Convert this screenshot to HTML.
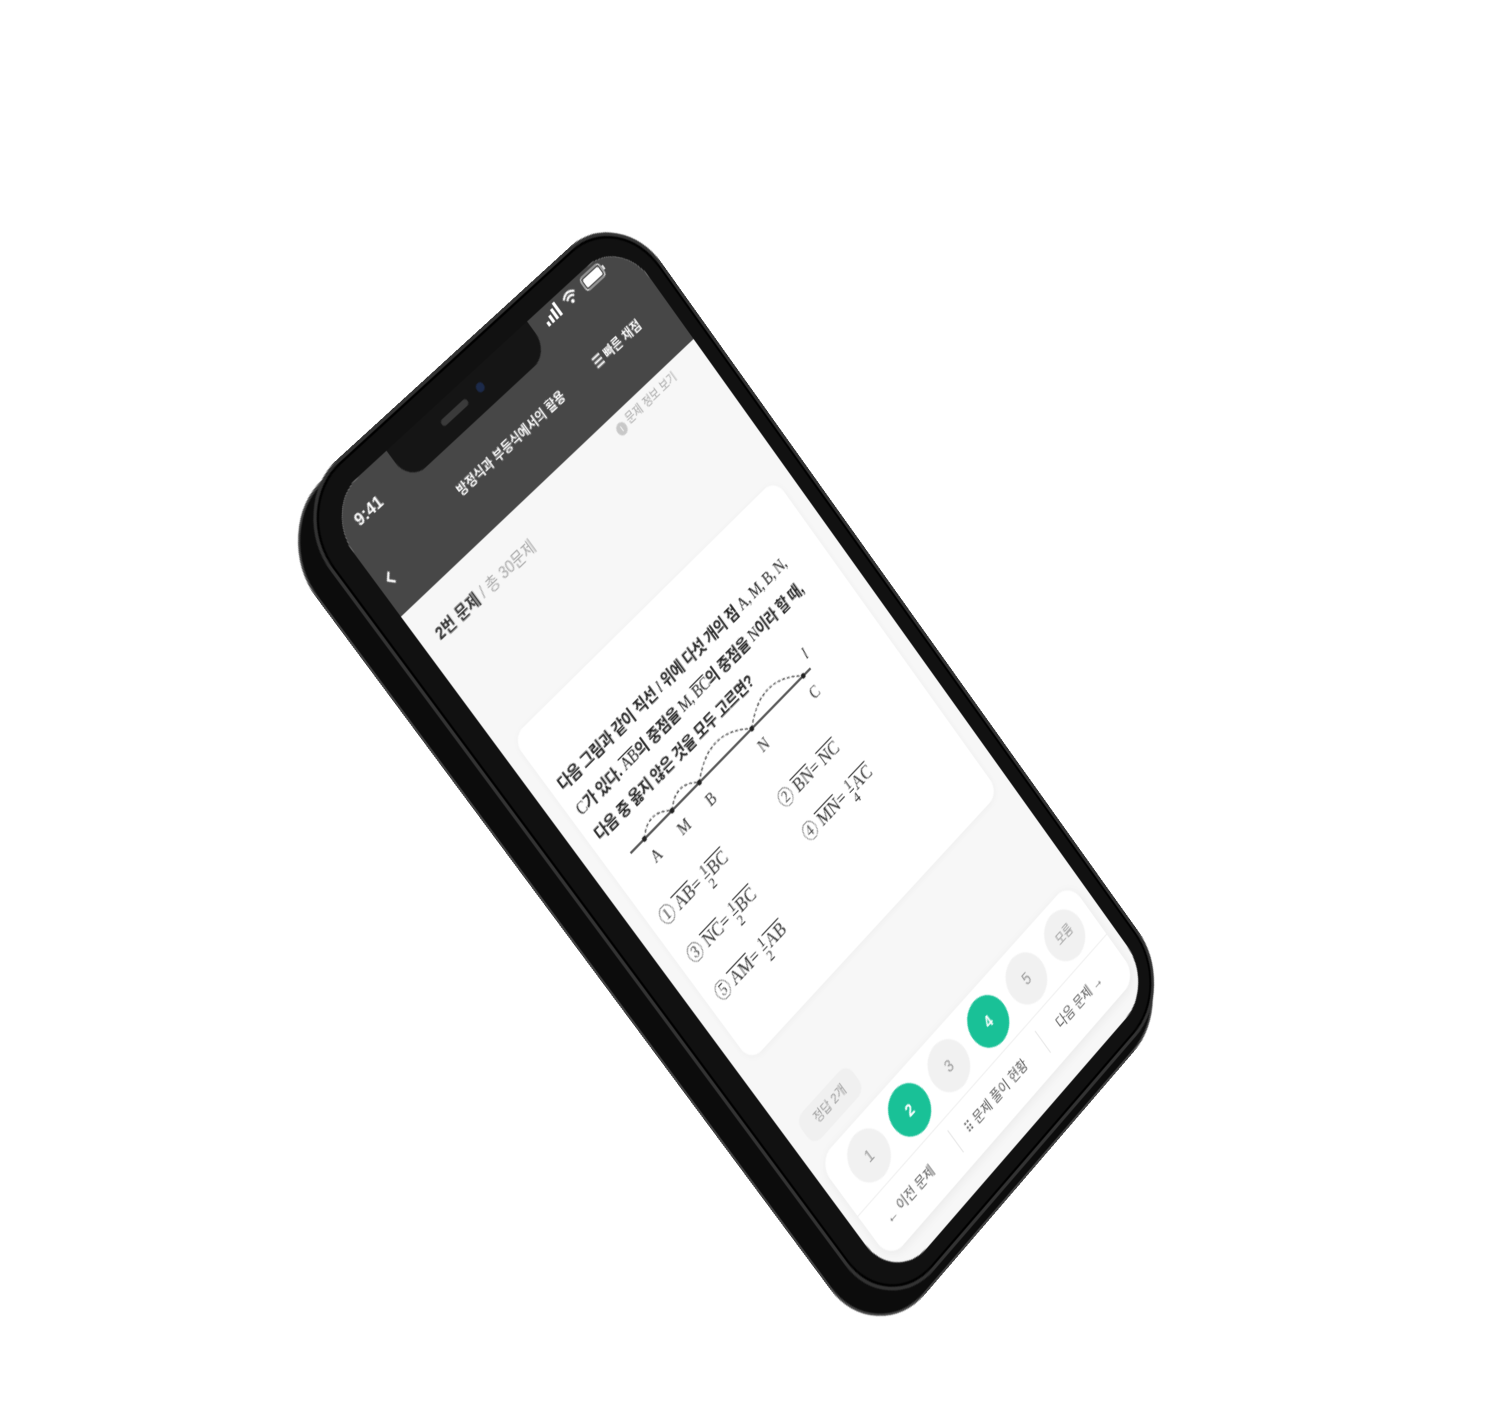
<!DOCTYPE html>
<html><head><meta charset="utf-8">
<style>
html,body{margin:0;padding:0;background:#fff;width:1498px;height:1416px;overflow:hidden}
*{box-sizing:border-box}
.world{position:absolute;left:0;top:0;width:375px;height:812px;transform-origin:0 0;
transform:matrix3d(0.8792,-0.6985,0,0.00013632, 0.7508,1.0192,0,0.00005044, 0,0,1,0, 322,510,0,1);
font-family:"Liberation Sans","Noto Sans CJK KR",sans-serif}
.abs{position:absolute}
.side{left:-50px;top:-18px;width:436px;height:856px;border-radius:68px;background:#0c0c0c;border:2px solid #444}
.body{left:-26px;top:-22px;width:419px;height:852px;border-radius:64px;background:#111;border:3px solid #333;box-shadow:inset 0 0 0 2px #000}
.screen{left:0;top:0;width:375px;height:812px;border-radius:44px;background:#f7f7f7;overflow:hidden}
.hdr{left:0;top:0;width:375px;height:108px;background:#474747}
.notch{left:78px;top:-2px;width:176px;height:34px;background:#151515;border-radius:0 0 20px 20px}
.w{color:#fff}
.c{position:absolute;width:44px;height:44px;border-radius:50%;background:#f1f1f1;color:#9a9a9a;font-size:14px;text-align:center;line-height:44px}
.c.g{background:#19c197;color:#fff;font-weight:bold}
.serif{font-family:"Liberation Serif","Noto Serif CJK SC",serif}
.ov{text-decoration:overline}
.fr{display:inline-block;vertical-align:middle;text-align:center;font-size:13px;line-height:13px;margin:0 1px}
.fr span{display:block}
.fr .n{border-bottom:1px solid #555}
</style></head><body>
<div class="world">
  <div class="abs side"></div>
  <div class="abs body"></div>
  <div class="abs screen">
    <div class="abs hdr"></div>
    <div class="abs notch"></div>
    <div class="abs" style="left:133px;top:12px;width:32px;height:6px;border-radius:3px;background:#3a3a3a"></div>
    <div class="abs" style="left:178px;top:10px;width:8px;height:8px;border-radius:50%;background:#1c2a4a"></div>
    <div class="abs w" style="left:18px;top:18px;font-size:15px;font-weight:bold">9:41</div>
    <svg class="abs" style="left:268px;top:2px" width="90" height="16" viewBox="0 0 90 16">
      <rect x="0" y="10" width="3" height="4" fill="#fff"/><rect x="5" y="7" width="3" height="7" fill="#fff"/><rect x="10" y="4" width="3" height="10" fill="#fff"/><rect x="15" y="1" width="3" height="13" fill="#fff"/>
      <path d="M26 6 Q33 0 40 6 M28.5 8.5 Q33 4.5 37.5 8.5" stroke="#fff" stroke-width="2" fill="none"/><circle cx="33" cy="11.5" r="1.8" fill="#fff"/>
      <rect x="50" y="2" width="24" height="12" rx="3" fill="none" stroke="#ddd" stroke-width="1.2"/><rect x="52" y="4" width="20" height="8" rx="1.5" fill="#fff"/><rect x="75" y="6" width="2" height="4" fill="#ddd"/>
    </svg>
    <svg class="abs" style="left:6px;top:72px" width="14" height="14" viewBox="0 0 14 14"><path d="M9 2 L4 7 L9 12" stroke="#fff" stroke-width="2" fill="none"/></svg>
    <div class="abs w" style="left:100px;top:58px;width:150px;text-align:center;font-size:11.5px;font-weight:bold;white-space:nowrap">방정식과 부등식에서의 활용</div>
    <div class="abs w" style="left:282px;top:58px;font-size:11.5px;font-weight:bold;white-space:nowrap">☰ 빠른 채점</div>
    <div class="abs" style="left:16px;top:130px;font-size:14px;white-space:nowrap"><b style="color:#333">2번 문제</b> <span style="color:#aaa">/ 총 30문제</span></div>
    <div class="abs" style="left:262px;top:112px;font-size:10.5px;color:#aaa;white-space:nowrap"><span style="display:inline-block;width:11px;height:11px;border-radius:50%;background:#c8c8c8;color:#fff;font-size:8px;line-height:11px;text-align:center;vertical-align:-1px">i</span> 문제 정보 보기</div>
    <div class="abs" style="left:15px;top:245px;width:345px;height:340px;background:#fff;border-radius:14px;box-shadow:0 1px 6px rgba(0,0,0,0.04)"></div>
    <div class="abs" style="left:24px;top:290px;width:340px;font-size:14px;line-height:24px;color:#222;font-weight:bold;letter-spacing:-0.4px;white-space:nowrap">
      다음 그림과 같이 직선 <i class="serif" style="font-weight:normal">l</i> 위에 다섯 개의 점 <span class="serif" style="font-weight:normal">A, M, B, N,</span><br>
      <span class="serif" style="font-weight:normal">C</span>가 있다. <span class="serif ov" style="font-weight:normal">AB</span>의 중점을 <span class="serif" style="font-weight:normal">M, </span><span class="serif ov" style="font-weight:normal">BC</span>의 중점을 <span class="serif" style="font-weight:normal">N</span>이라 할 때,<br>
      다음 중 옳지 않은 것을 모두 고르면?
    </div>
    <svg class="abs" style="left:30px;top:355px" width="260" height="65" viewBox="0 0 260 65">
      <line x1="10" y1="30" x2="250" y2="30" stroke="#222" stroke-width="1.4"/>
      <g fill="none" stroke="#444" stroke-width="1.2" stroke-dasharray="3 2">
        <path d="M28 30 Q45 14 64 30"/><path d="M64 30 Q82 14 100 30"/><path d="M100 30 Q135 2 170 30"/><path d="M170 30 Q205 2 240 30"/>
      </g>
      <g fill="#222"><circle cx="28" cy="30" r="2.3"/><circle cx="64" cy="30" r="2.3"/><circle cx="100" cy="30" r="2.3"/><circle cx="170" cy="30" r="2.3"/><circle cx="240" cy="30" r="2.3"/></g>
      <g font-family="Liberation Serif,serif" font-size="14" fill="#333">
        <text x="23" y="52">A</text><text x="58" y="52">M</text><text x="95" y="52">B</text><text x="165" y="52">N</text><text x="235" y="52">C</text><text x="252" y="22" font-style="italic">l</text>
      </g>
    </svg>
    <div class="abs serif" style="left:26px;top:432px;font-size:16px;color:#333;white-space:nowrap">① <span class="ov">AB</span>= <span class="fr"><span class="n">1</span><span>2</span></span><span class="ov">BC</span></div>
    <div class="abs serif" style="left:180px;top:436px;font-size:16px;color:#333;white-space:nowrap">② <span class="ov">BN</span>= <span class="ov">NC</span></div>
    <div class="abs serif" style="left:26px;top:472px;font-size:16px;color:#333;white-space:nowrap">③ <span class="ov">NC</span>= <span class="fr"><span class="n">1</span><span>2</span></span><span class="ov">BC</span></div>
    <div class="abs serif" style="left:180px;top:472px;font-size:16px;color:#333;white-space:nowrap">④ <span class="ov">MN</span>= <span class="fr"><span class="n">1</span><span>4</span></span><span class="ov">AC</span></div>
    <div class="abs serif" style="left:26px;top:512px;font-size:16px;color:#333;white-space:nowrap">⑤ <span class="ov">AM</span>= <span class="fr"><span class="n">1</span><span>2</span></span><span class="ov">AB</span></div>
    <div class="abs" style="left:16px;top:648px;width:70px;height:28px;border-radius:10px;background:#f0f0f0;color:#999;font-size:11px;text-align:center;line-height:28px">정답 2개</div>
    <div class="abs" style="left:10px;top:688px;width:355px;height:106px;background:#fff;border-radius:18px;box-shadow:0 2px 10px rgba(0,0,0,0.06)"></div>
    <div class="c" style="left:30px;top:696px">1</div>
    <div class="c g" style="left:86px;top:696px">2</div>
    <div class="c" style="left:141px;top:696px">3</div>
    <div class="c g" style="left:197px;top:696px">4</div>
    <div class="c" style="left:252px;top:696px">5</div>
    <div class="c" style="left:308px;top:696px;font-size:11px">모름</div>
    <div class="abs" style="left:10px;top:746px;width:355px;height:1px;background:#f0f0f0"></div>
    <div class="abs" style="left:125px;top:756px;width:1px;height:24px;background:#e6e6e6"></div>
    <div class="abs" style="left:250px;top:756px;width:1px;height:24px;background:#e6e6e6"></div>
    <div class="abs" style="left:30px;top:760px;font-size:12px;color:#555;white-space:nowrap">&larr; 이전 문제</div>
    <div class="abs" style="left:140px;top:760px;font-size:12px;color:#555;white-space:nowrap">⠿ 문제 풀이 현황</div>
    <div class="abs" style="left:272px;top:760px;font-size:12px;color:#555;white-space:nowrap">다음 문제 &rarr;</div>
  </div>
</div>
</body></html>
